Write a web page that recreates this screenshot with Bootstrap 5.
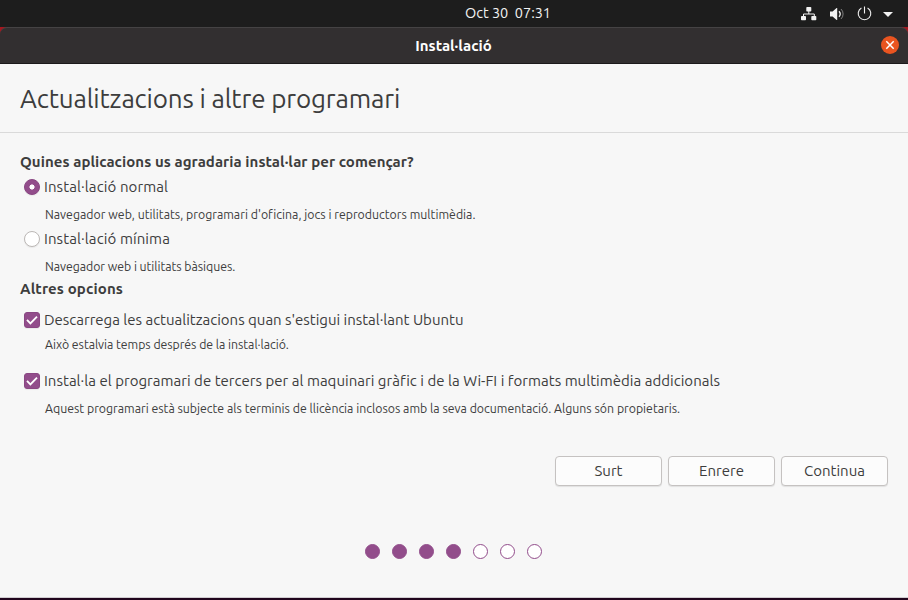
<!DOCTYPE html>
<html lang="ca">
<head>
<meta charset="utf-8">
<meta name="viewport" content="width=device-width, initial-scale=1">
<title>Instal·lació</title>
<link href="https://cdn.jsdelivr.net/npm/bootstrap@5.3.0/dist/css/bootstrap.min.css" rel="stylesheet">
<style>
:root { --accent: #924d8b; --ink: #3d3d3d; }
body { font: 15px/22px Ubuntu, "Noto Sans", sans-serif; font-feature-settings: "locl" 0; color: var(--ink); background: #1d1d1d; height: 600px; overflow: hidden; }
.top-panel { height: 27px; background: #1d1d1d; color: #f2f2f2; display: grid; grid-template-columns: 1fr auto 1fr; align-items: center; padding-left: 108px; }
.clock { font-size: 14.5px; letter-spacing: -.02px; white-space: pre; padding-bottom: 1px; }
.status-icons { padding-right: 12px; gap: 12px; }
.status-icons svg { display: block; }
.status-icons .caret-icon { margin-left: -5px; }
.desktop-bg { background: #a5171f; }
.title-bar { height: 37px; background: #322f30; border-top: 1px solid #454344; border-bottom: 1px solid #1c1a1b; border-radius: 7px 7px 0 0; color: #fff; display: grid; grid-template-columns: 1fr auto 1fr; align-items: center; padding-right: 1px; }
.close-btn { width: 18px; height: 18px; margin: 0 8px 1px 0; border: 0; padding: 0; background: none; line-height: 0; }
.window-body { background: #f7f7f7; height: 534px; border-bottom: 1px solid #d0cdd0; }
.page-title { height: 69px; padding: 2px 20px 0; border-bottom: 1px solid #dadada; }
.page-title h1 { font-size: 26px; font-weight: 400; letter-spacing: -.14px; line-height: 34px; color: var(--ink); }
.options { padding: 18px 20px 0; }
.options h2 { font-size: 15px; line-height: 22px; margin: 0; font-weight: 700; }
.options .q-head { letter-spacing: .055px; }
.options .o-head { letter-spacing: .12px; margin-top: 0; }
.choice { min-height: 22px; margin: 3px 0 0; padding-left: 24px; display: block; white-space: nowrap; }
.hint + .choice { margin-top: 2px; }
.choice .form-check-input { width: 16px; height: 16px; margin: 3px 0 0 -20px; border: 1px solid #bcb8b6; background-color: #fff; box-shadow: 0 1px 1px rgba(0,0,0,.06); }
.choice .form-check-input:checked { background-color: var(--accent); border-color: #8a4783; }
.choice .form-check-input[type=radio]:checked { background-image: radial-gradient(circle, #fff 2.2px, transparent 2.9px); background-position: center; background-size: 100% 100%; }
.choice .form-check-input[type=checkbox] { border-radius: 3px; background-image: none; }
.tick-box { position: relative; margin-top: 9px; letter-spacing: -.01px; }
.hint + .tick-box { margin-top: 14px; letter-spacing: .024px; }
.tick-box svg { position: absolute; left: 4px; top: 3px; pointer-events: none; }
.hint { font-size: 12.3px; line-height: 22px; margin: 6px 0 0; padding-left: 25px; white-space: nowrap; }
.hint.near { margin-top: 3px; }
.ls-a { letter-spacing: .1px; }
.ls-c { letter-spacing: .017px; }
.ls-d { letter-spacing: 0; }
.ls-e { letter-spacing: -.04px; }
.actions { margin-top: 36px; padding-right: 20px; gap: 6px; }
.actions .btn { width: 107px; height: 30px; padding: 0 0 1px; font-size: 15px; line-height: 27px; color: var(--ink); background: #fcfcfc; border: 1px solid #c5c2c1; border-radius: 4px; box-shadow: 0 1px 1px rgba(0,0,0,.09); }
.steps { margin-top: 58px; gap: 12px; padding-right: 1px; }
.step-dot { width: 15px; height: 15px; border-radius: 50%; border: 1px solid var(--accent); background: #fff; }
.step-dot.done { background: var(--accent); }
.desktop-edge { height: 2px; background: #21061d; }
</style>
</head>
<body>
<header class="top-panel">
  <span></span>
  <span class="clock">Oct 30  07:31</span>
  <div class="status-icons d-flex justify-content-end align-items-center">
    <svg width="16" height="16" viewBox="0 0 16 16" fill="#f2f2f2"><rect x="5.3" y="1" width="5" height="4.5" rx=".8"/><rect x="0" y="10" width="5" height="4.3" rx=".8"/><rect x="10.3" y="10" width="5" height="4.3" rx=".8"/><path d="M7.8 5v3M2.5 10.5V8h10.8v2.5" fill="none" stroke="#f2f2f2"/></svg>
    <svg width="16" height="16" viewBox="0 0 16 16" fill="none" stroke="#f2f2f2"><path d="M1 5.5h2.6L7.6 2h.6v12h-.6l-4-3.5H1z" fill="#f2f2f2" stroke="none"/><path d="M10 5.3a4 4 0 0 1 0 5.4" stroke-width="1.3"/><path d="M12 3a7 7 0 0 1 0 10" opacity=".45"/></svg>
    <svg width="16" height="16" viewBox="0 0 16 16" fill="none" stroke="#f2f2f2" stroke-width="1.1"><path d="M4.4 2a6.3 6.3 0 1 0 6.2 0M7.5 .5v7"/></svg>
    <svg class="caret-icon" width="16" height="16" viewBox="0 0 16 16"><path d="M3 6h10L8 11z" fill="#f2f2f2"/></svg>
  </div>
</header>
<main>
  <div class="desktop-bg">
    <div class="title-bar">
      <span></span>
      <strong>Instal·lació</strong>
      <div class="d-flex justify-content-end">
        <button class="close-btn" type="button" aria-label="Tanca"><svg width="18" height="18" viewBox="0 0 18 18"><circle cx="9" cy="9" r="9" fill="#e95420"/><path d="M5.3 5.3l7.4 7.4m0-7.4l-7.4 7.4" stroke="#fff" stroke-width="1.5"/></svg></button>
      </div>
    </div>
  </div>
  <div class="window-body">
    <div class="page-title d-flex align-items-center"><h1 class="m-0">Actualitzacions i altre programari</h1></div>
    <form class="options">
      <h2 class="q-head">Quines aplicacions us agradaria instal·lar per començar?</h2>
      <label class="form-check choice ls-a"><input class="form-check-input" type="radio" name="kind" checked>Instal·lació normal</label>
      <p class="hint ls-c">Navegador web, utilitats, programari d'oficina, jocs i reproductors multimèdia.</p>
      <label class="form-check choice ls-a"><input class="form-check-input" type="radio" name="kind">Instal·lació mínima</label>
      <p class="hint ls-e">Navegador web i utilitats bàsiques.</p>
      <h2 class="o-head">Altres opcions</h2>
      <label class="form-check choice tick-box"><input class="form-check-input" type="checkbox" checked><svg width="16" height="16" viewBox="0 0 16 16"><path d="M3 7.9l3.4 3.4L13 4.7" fill="none" stroke="#fff" stroke-width="1.9"/></svg>Descarrega les actualitzacions quan s'estigui instal·lant Ubuntu</label>
      <p class="hint near ls-e">Això estalvia temps després de la instal·lació.</p>
      <label class="form-check choice tick-box"><input class="form-check-input" type="checkbox" checked><svg width="16" height="16" viewBox="0 0 16 16"><path d="M3 7.9l3.4 3.4L13 4.7" fill="none" stroke="#fff" stroke-width="1.9"/></svg>Instal·la el programari de tercers per al maquinari gràfic i de la Wi-FI i formats multimèdia addicionals</label>
      <p class="hint ls-d">Aquest programari està subjecte als terminis de llicència inclosos amb la seva documentació. Alguns són propietaris.</p>
    </form>
    <div class="actions d-flex justify-content-end">
      <button class="btn" type="button">Surt</button>
      <button class="btn" type="button">Enrere</button>
      <button class="btn" type="button">Continua</button>
    </div>
    <div class="steps d-flex justify-content-center">
      <span class="step-dot done"></span><span class="step-dot done"></span><span class="step-dot done"></span><span class="step-dot done"></span><span class="step-dot"></span><span class="step-dot"></span><span class="step-dot"></span>
    </div>
  </div>
  <div class="desktop-edge"></div>
</main>
</body>
</html>
